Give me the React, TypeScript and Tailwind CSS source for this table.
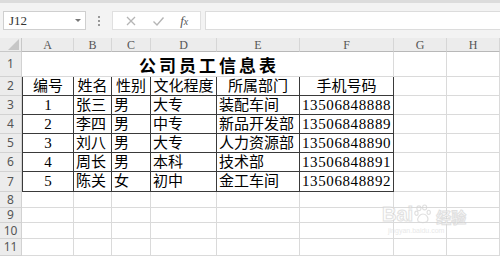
import React from "react";

const cols = ["A", "B", "C", "D", "E", "F", "G", "H"];
const colWidths = "22px 52px 38px 39px 66px 83px 94px 53px 53px";
const rowHeights = "14px 25px 19px 19px 19px 19px 19px 20px 16px 15px 16px 17px";

const header = ["编号", "姓名", "性别", "文化程度", "所属部门", "手机号码"];
const people = [
  ["1", "张三", "男", "大专", "装配车间", "13506848888"],
  ["2", "李四", "男", "中专", "新品开发部", "13506848889"],
  ["3", "刘八", "男", "大专", "人力资源部", "13506848890"],
  ["4", "周长", "男", "本科", "技术部", "13506848891"],
  ["5", "陈关", "女", "初中", "金工车间", "13506848892"],
];

const cellFont = { fontFamily: '"Liberation Serif", "Noto Sans CJK SC", serif' };

const RowHead = ({ n }: { n: number }) => (
  <div className="flex items-center justify-center bg-[#ececec] border-r border-b border-[#d2d2d2] text-[12px] text-[#555] leading-none">
    {n}
  </div>
);

const Toolbar = () => (
  <div className="h-[38px] bg-[#f3f3f3] border-t-[3px] border-[#dcdcdc] flex items-start pt-[8px] pl-[3px]" style={cellFont}>
    <div className="w-[83px] h-[19px] bg-white border border-[#cfcfcf] flex items-center justify-between pl-[5px] pr-[4px]">
      <span className="text-[13px] text-[#333] leading-none">J12</span>
      <span className="w-0 h-0 border-l-[3px] border-r-[3px] border-t-[3px] border-l-transparent border-r-transparent border-t-[#777]" />
    </div>
    <div className="w-[26px] h-[19px] flex flex-col items-center justify-center gap-[2px]">
      <span className="w-[2px] h-[2px] bg-[#999]" />
      <span className="w-[2px] h-[2px] bg-[#999]" />
      <span className="w-[2px] h-[2px] bg-[#999]" />
    </div>
    <div className="w-[89px] h-[19px] bg-white border border-[#e0e0e0] flex items-center justify-around px-[4px]">
      <svg width="12" height="12" viewBox="0 0 12 12">
        <path d="M2 2 L10 10 M10 2 L2 10" stroke="#b5b5b5" strokeWidth="1.3" />
      </svg>
      <svg width="13" height="12" viewBox="0 0 13 12">
        <path d="M1.5 6.5 L5 10 L11.5 2.5" stroke="#b5b5b5" strokeWidth="1.4" fill="none" />
      </svg>
      <span className="text-[13px] italic text-[#555] leading-none">
        f<span className="text-[10px]">x</span>
      </span>
    </div>
    <div className="ml-[4px] flex-1 h-[19px] bg-white border border-[#dcdcdc] border-r-0" />
  </div>
);

export default function App() {
  const dark = "border-[#3a3a3a]";
  const light = "border-[#dadada]";

  return (
    <div className="w-[500px] h-[256px] overflow-hidden bg-white relative select-none">
      <Toolbar />
      <div className="grid" style={{ gridTemplateColumns: colWidths, gridTemplateRows: rowHeights }}>
        {/* column headers */}
        <div className="bg-[#ececec] border-r border-b border-[#c8c8c8] flex items-end justify-end pr-[2px] pb-[1px]">
          <svg width="11" height="11" viewBox="0 0 11 11">
            <path d="M11 0 L11 11 L0 11 Z" fill="#c6c6c6" />
          </svg>
        </div>
        {cols.map((c) => (
          <div
            key={c}
            className="bg-[#ececec] border-r border-b border-r-[#d6d6d6] border-b-[#b8b8b8] flex items-center justify-center text-[12px] text-[#555] leading-none overflow-hidden"
            style={cellFont}
          >
            {c}
          </div>
        ))}

        {/* row 1: title */}
        <RowHead n={1} />
        <div
          className={`col-span-6 border-r ${light} border-b ${dark} flex items-center justify-center pl-[3px] text-[17px] tracking-[3px] font-bold text-black leading-none`}
          style={{ fontFamily: '"Noto Sans CJK SC", sans-serif' }}
        >
          公司员工信息表
        </div>
        <div className={`border-r border-b ${light}`} />
        <div className={`border-r border-b ${light}`} />

        {/* row 2: header */}
        <RowHead n={2} />
        {header.map((h, i) => (
          <div
            key={h}
            className={`border-r border-b ${dark} ${i === 0 ? "border-l" : ""} flex items-center justify-center text-[15px] text-black leading-none whitespace-nowrap`}
            style={cellFont}
          >
            {h}
          </div>
        ))}
        <div className={`border-r border-b ${light}`} />
        <div className={`border-r border-b ${light}`} />

        {/* rows 3-7 */}
        {people.map((p, r) => (
          <React.Fragment key={p[0]}>
            <RowHead n={r + 3} />
            {p.map((v, i) => (
              <div
                key={i}
                className={`border-r border-b ${dark} ${i === 0 ? "border-l justify-center" : "justify-start pl-[2px]"} ${i === 5 ? "tracking-[0.6px]" : ""} flex items-center text-[15px] text-black leading-none whitespace-nowrap overflow-hidden`}
                style={cellFont}
              >
                {v}
              </div>
            ))}
            <div className={`border-r border-b ${light}`} />
            <div className={`border-r border-b ${light}`} />
          </React.Fragment>
        ))}

        {/* rows 8-11 empty */}
        {[8, 9, 10, 11].map((n) => (
          <React.Fragment key={n}>
            <RowHead n={n} />
            {cols.map((c) => (
              <div key={c} className={`border-r border-b ${light}`} />
            ))}
          </React.Fragment>
        ))}
      </div>

      {/* watermark */}
      <div className="absolute left-[382px] top-[204px] flex flex-col items-start pointer-events-none opacity-70">
        <div className="flex items-end gap-[1px] leading-none whitespace-nowrap">
          <span className="text-[20px] font-bold text-white leading-none" style={{ fontFamily: '"Liberation Sans", sans-serif', WebkitTextStroke: "1px #d4d4d4" }}>
            Bai
          </span>
          <svg width="18" height="20" viewBox="0 0 22 24">
            <g fill="none" stroke="#d4d4d4" strokeWidth="1.4">
              <ellipse cx="6" cy="5" rx="2.5" ry="3" />
              <ellipse cx="13" cy="4" rx="2.5" ry="3" />
              <ellipse cx="3" cy="11" rx="2" ry="2.6" />
              <ellipse cx="18" cy="10" rx="2" ry="2.6" />
              <path d="M5 21 C3 16 8 12 11 12 C15 12 19 17 16 21 C14 23 8 23 5 21 Z" />
            </g>
          </svg>
          <span className="ml-[3px] text-[15px] font-bold text-white leading-none" style={{ fontFamily: '"Noto Sans CJK SC", sans-serif', WebkitTextStroke: "1px #d4d4d4" }}>
            经验
          </span>
        </div>
        <span className="text-[7px] text-[#e0e0e0] mt-[3px] ml-[6px] leading-none" style={{ fontFamily: '"Liberation Sans", sans-serif' }}>
          jingyan.baidu.com
        </span>
      </div>
    </div>
  );
}
